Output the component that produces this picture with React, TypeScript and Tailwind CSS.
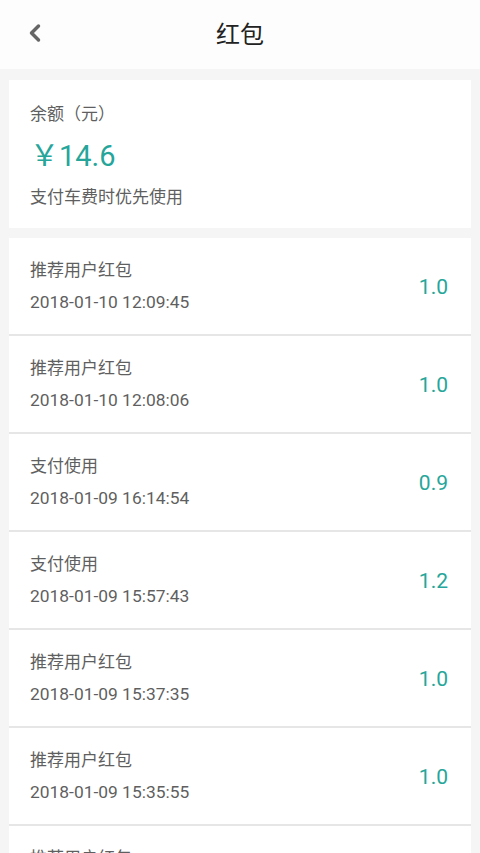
import { ChevronLeft } from "lucide-react";

const records = [
  { name: "推荐用户红包", time: "2018-01-10 12:09:45", amount: "1.0" },
  { name: "推荐用户红包", time: "2018-01-10 12:08:06", amount: "1.0" },
  { name: "支付使用", time: "2018-01-09 16:14:54", amount: "0.9" },
  { name: "支付使用", time: "2018-01-09 15:57:43", amount: "1.2" },
  { name: "推荐用户红包", time: "2018-01-09 15:37:35", amount: "1.0" },
  { name: "推荐用户红包", time: "2018-01-09 15:35:55", amount: "1.0" },
  { name: "推荐用户红包", time: "2018-01-09 15:30:12", amount: "1.0" },
];

export default function App() {
  return (
    <div
      className="w-[480px] h-[853px] overflow-hidden bg-[#f5f5f5] text-[#5f5f5f]"
      style={{ fontFamily: '"Roboto", "Noto Sans CJK SC", sans-serif' }}
    >
      <header className="h-[69px] bg-[#fdfdfd] relative flex items-center justify-center">
        <ChevronLeft
          className="absolute left-[21px] top-[18px] w-[28px] h-[30px] text-[#666]"
          strokeWidth={3}
        />
        <h1 className="text-[24px] text-[#222] font-normal">红包</h1>
      </header>

      <div className="px-[9px] pt-[11px]">
        <section className="bg-white h-[148px] pl-[21px] pt-[20px] flex flex-col">
          <p className="text-[17px] leading-[28px]">余额（元）</p>
          <p className="text-[29px] leading-[50px] text-[#26a69a]">
            <span style={{ fontFamily: '"Noto Sans CJK SC", sans-serif' }}>￥</span>14.6
          </p>
          <p className="text-[17px] leading-[28px] mt-[2px]">支付车费时优先使用</p>
        </section>

        <ul className="mt-[10px]">
          {records.map((r, i) => (
            <li
              key={i}
              className="bg-white h-[98px] border-b-2 border-[#e6e6e6] flex items-center justify-between pl-[21px] pr-[23px]"
            >
              <div className="flex flex-col">
                <span className="text-[17px] leading-[32px]">{r.name}</span>
                <span className="text-[17.4px] leading-[32px]">{r.time}</span>
              </div>
              <span className="text-[21px] text-[#26a69a] pt-[4px]">{r.amount}</span>
            </li>
          ))}
        </ul>
      </div>
    </div>
  );
}
